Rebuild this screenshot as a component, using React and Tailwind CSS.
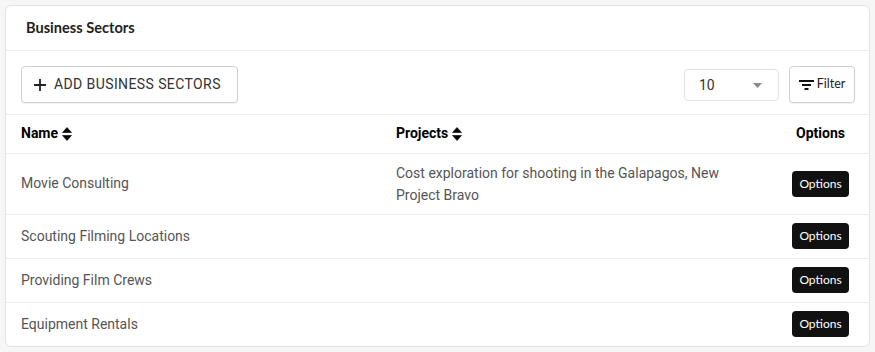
import React from 'react';

const rows = [
  { name: 'Movie Consulting', projects: 'Cost exploration for shooting in the Galapagos, New Project Bravo' },
  { name: 'Scouting Filming Locations', projects: '' },
  { name: 'Providing Film Crews', projects: '' },
  { name: 'Equipment Rentals', projects: '' },
];

function SortIcon() {
  return (
    <svg width="10" height="14" viewBox="0 0 10 14" className="inline-block ml-[4px] -mt-[2px]">
      <path d="M5 0.5 L9.5 5.5 L0.5 5.5 Z" fill="#000" stroke="#000" strokeWidth="0.6" strokeLinejoin="round" />
      <path d="M5 13.5 L9.5 8.5 L0.5 8.5 Z" fill="#000" stroke="#000" strokeWidth="0.6" strokeLinejoin="round" />
    </svg>
  );
}

export default function App() {
  return (
    <div className="min-h-screen bg-[#f6f6f6] p-[5px] font-['Roboto',sans-serif]">
      <div className="w-[865px] h-[342px] bg-white border border-[#e3e3e3] rounded-[6px] overflow-hidden">
        {/* Header */}
        <div className="h-[45px] flex items-center px-5 border-b border-[#ececec]">
          <h2 className="text-[14.6px] font-bold text-[#222] font-['Lato',sans-serif]">Business Sectors</h2>
        </div>

        {/* Toolbar */}
        <div className="h-[64px] flex items-start justify-between pl-[15px] pr-[14px] pt-[15px] border-b border-[#ececec]">
          <button className="h-[37px] w-[217px] flex items-center gap-2 pl-3 border border-[#cfcfcf] rounded-[4px] shadow-[0_1px_1px_rgba(0,0,0,0.06)] text-[14px] tracking-[0.4px] text-[#333]">
            <svg width="12" height="12" viewBox="0 0 12 12">
              <path d="M6 0 V12 M0 6 H12" stroke="#222" strokeWidth="1.8" />
            </svg>
            ADD BUSINESS SECTORS
          </button>
          <div className="flex items-start gap-[10px]">
            <div className="mt-[3px] h-[32px] w-[95px] flex items-center justify-between pl-[14px] pr-[16px] border border-[#e2e2e2] rounded-[4px] text-[14px] text-[#333]">
              <span>10</span>
              <svg width="9" height="5" viewBox="0 0 9 5">
                <path d="M0 0 H9 L4.5 5 Z" fill="#8a8a8a" />
              </svg>
            </div>
            <button className="h-[37px] w-[66px] flex items-center justify-center gap-[3px] border border-[#cfcfcf] rounded-[4px] shadow-[0_1px_1px_rgba(0,0,0,0.06)] text-[12.5px] text-[#222] font-['Lato',sans-serif]">
              <svg width="15" height="10" viewBox="0 0 15 10">
                <path d="M0 1 H15 M3 5 H12 M5.5 9 H9.5" stroke="#111" strokeWidth="1.8" />
              </svg>
              Filter
            </button>
          </div>
        </div>

        {/* Table */}
        <table className="w-full border-collapse table-fixed text-[14px]">
          <colgroup>
            <col className="w-[375px]" />
            <col className="w-[391px]" />
            <col />
          </colgroup>
          <thead>
            <tr className="h-[38px] border-b border-[#ececec]">
              <th className="text-left font-bold text-black px-[15px]">Name<SortIcon /></th>
              <th className="text-left font-bold text-black px-[15px]">Projects<SortIcon /></th>
              <th className="text-center font-bold text-black px-[15px]">Options</th>
            </tr>
          </thead>
          <tbody>
            {rows.map((row, idx) => (
              <tr
                key={idx}
                className={`${idx === 0 ? 'h-[61px]' : 'h-[44px]'} ${idx < rows.length - 1 ? 'border-b border-[#ececec]' : ''}`}
              >
                <td className="px-[15px] text-[#555]">{row.name}</td>
                <td className="px-[15px] text-[#555] leading-[22px]">{row.projects}</td>
                <td className="px-[15px] text-center">
                  <button className="h-[26px] px-[7px] bg-[#111] text-white rounded-[4px] text-[12px] font-['Lato',sans-serif]">
                    Options
                  </button>
                </td>
              </tr>
            ))}
          </tbody>
        </table>
      </div>
    </div>
  );
}
